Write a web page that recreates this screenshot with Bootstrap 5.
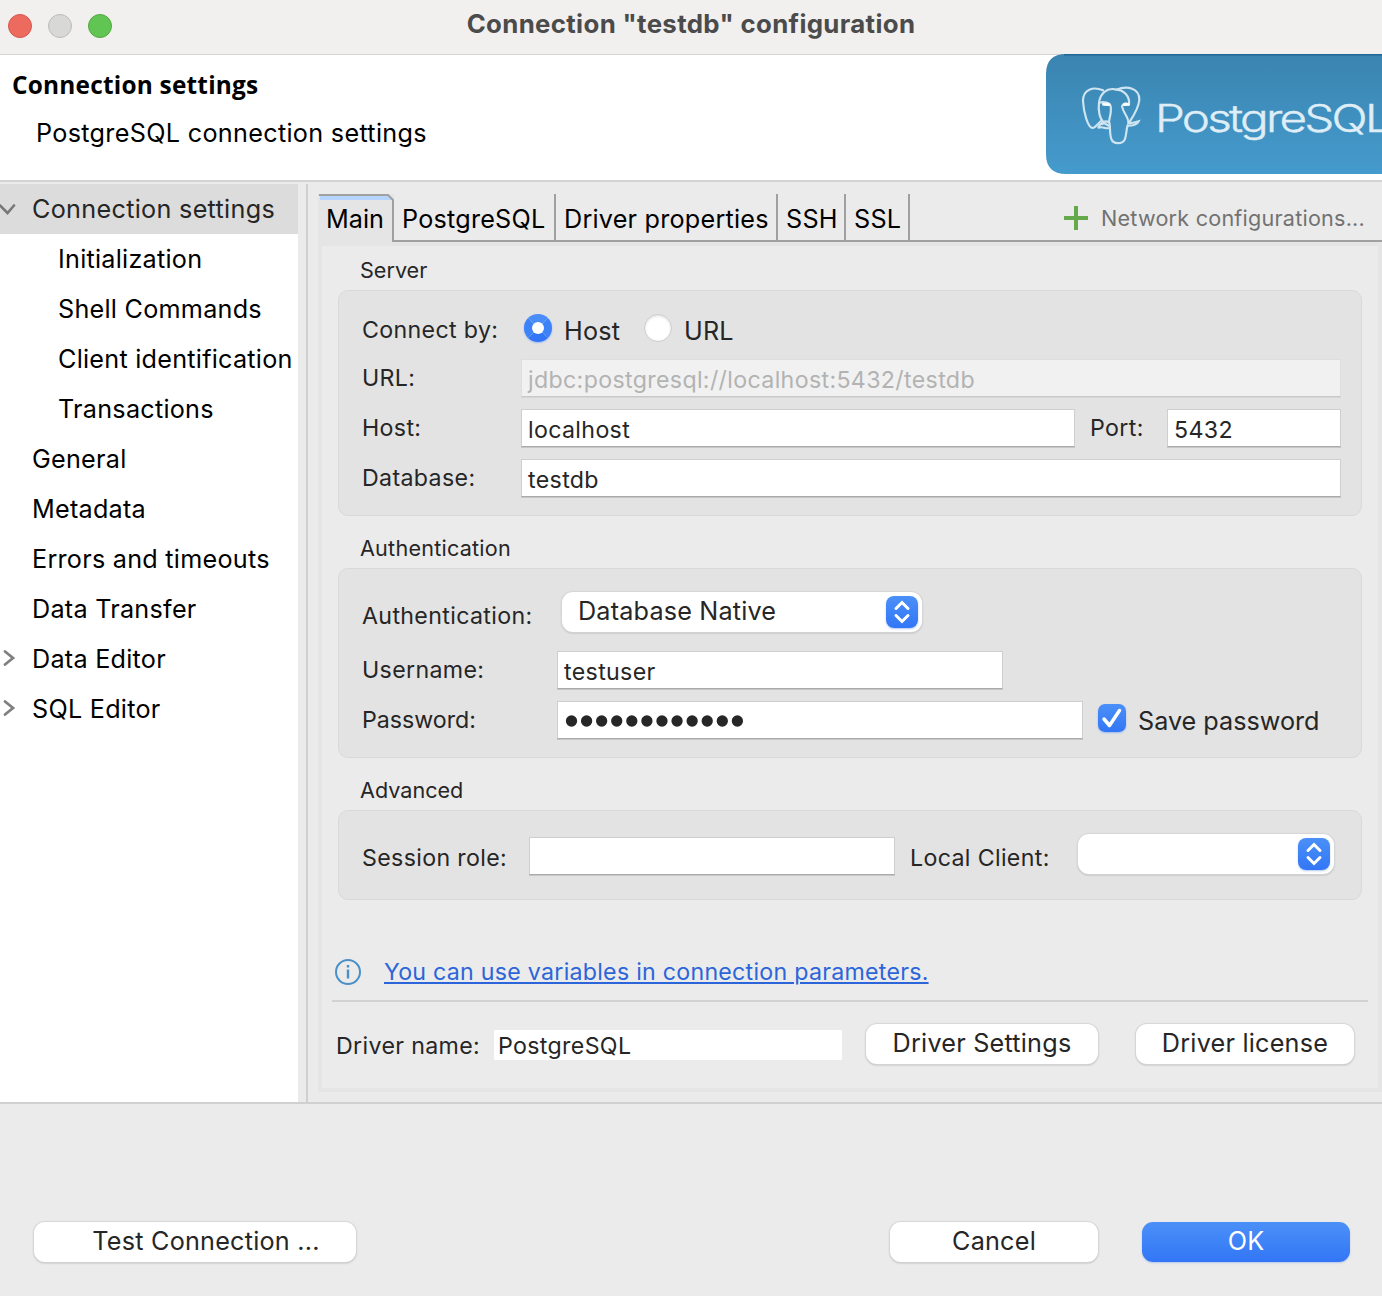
<!DOCTYPE html>
<html lang="en">
<head>
<meta charset="utf-8">
<meta name="viewport" content="width=device-width, initial-scale=1">
<title>Connection "testdb" configuration</title>
<link href="https://cdn.jsdelivr.net/npm/bootstrap@5.3.0/dist/css/bootstrap.min.css" rel="stylesheet">
<style>
  body { width: 1382px; height: 1296px; overflow: hidden; background: #ebebeb; color: #262626; font-family: Inter, "Liberation Sans", sans-serif; font-size: 25.2px; line-height: 40px; letter-spacing: .22px; white-space: nowrap; }
  .f24 { font-size: 23.2px; letter-spacing: .34px; }
  .f22 { font-size: 21.6px; }
  .big { font-size: 25.2px; letter-spacing: .18px; }
  .tight { letter-spacing: 0; }
  .link-text { letter-spacing: .255px; }

  .titlebar { height: 55px; background: #f1f0ee; border-bottom: 1px solid #d6d5d4; padding: 0 8px; }
  .titlebar .side { width: 104px; gap: 16px; padding-top: 2px; }
  .light { width: 24px; height: 24px; border-radius: 50%; border: 1px solid; }
  .light.red { background: #ed6a5f; border-color: #d5564b; }
  .light.gray { background: #d8d8d7; border-color: #bcbbba; }
  .light.green { background: #61c554; border-color: #51a73e; }
  .wintitle { font-weight: 700; color: #4c4b4b; line-height: 48px; font-size: 25.8px; letter-spacing: .35px; }

  .head { height: 127px; background: #fff; color: #000; border-bottom: 2px solid #d3d3d3; }
  .head h1 { font: 700 24.4px/36px "Open Sans", "Noto Sans", sans-serif; letter-spacing: .22px; margin: 12px 0 0 12px; }
  .head p { margin: 9px 0 0 36px; line-height: 42px; letter-spacing: .31px; }
  .banner { width: 336px; height: 120px; margin-top: -1px; }

  .content { height: 922px; padding-top: 2px; border-bottom: 2px solid #d0d0d0; }
  .tree { width: 298px; background: #fff; color: #000; margin-right: 8px; letter-spacing: .25px; }
  .node { height: 50px; line-height: 50px; padding-left: 32px; position: relative; }
  .node.child { padding-left: 58px; }
  .node.sel { background: #dcdcdc; color: #262626; letter-spacing: .3px; }
  .node svg { position: absolute; left: 0; top: 15px; width: 16px; height: 20px; }
  .sashline { width: 2px; background: #d0d0d0; }

  .folder { margin: 10px 0 10px 10px; width: 1064px; }
  .tabs { height: 48px; color: #000; line-height: 50px; }
  .tab1 { width: 76px; background: #e5e5e5; position: relative; padding-left: 8px; letter-spacing: 0; }
  .tab1 svg { position: absolute; left: 0; top: 0; }
  .tab1 span { position: relative; }
  .tab { border-right: 2px solid #a0a0a0; border-bottom: 2px solid #a0a0a0; padding-left: 8px; }
  .tab.t-pg { width: 162px; }
  .tab.t-props { width: 222px; }
  .tab.t-ssh { width: 68px; }
  .tab.t-ssl { width: 64px; }
  .tabrest { border-bottom: 2px solid #a0a0a0; color: #727272; line-height: 48px; padding-right: 17px; }
  .tabrest svg { margin: 12px 13px 0 0; }

  .pane { height: 850px; border: 4px solid #e5e5e5; padding: 0 16px; }
  .grouptitle { padding-left: 22px; line-height: 24px; height: 24px; margin-top: 20px; }
  .grouptitle.first { margin-top: 12px; }
  .groupbox { background: #e3e3e3; border: 1px solid #d9d9d9; border-radius: 10px; padding: 0 20px 0 23px; margin-top: 8px; }
  .server { height: 226px; }
  .server .lab { width: 159px; }
  .server .lab.port { width: 92px; padding-left: 15px; }
  .auth { height: 190px; }
  .auth .lab { width: 195px; }
  .advanced { height: 90px; padding-top: 26px; }
  .line { height: 50px; }
  .line.radios { height: 68px; padding-top: 20px; }
  .line.method { height: 82px; padding-top: 23px; }
  .lab { line-height: 38px; flex: none; }
  .server .lab.wide { width: 162px; }
  .auth .lab.wide { width: 200px; padding-top: 5px; }
  .field { height: 38px; background: #fff; border: 1px solid #cfcfcf; border-bottom-color: #ababab; box-shadow: 0 1px #c6c6c6; line-height: 40px; padding-left: 6px; }
  .field.off { background: #f1f1f1; border-color: #dedede; border-bottom-color: #c8c8c8; box-shadow: 0 1px #d6d6d6; color: #b3b3b3; }
  .rad { width: 28px; height: 28px; margin-top: 3px; border-radius: 50%; background: #fff; border: 1px solid #cdcdcd; box-shadow: inset 0 1px 3px #ddd; }
  .rad.on { border: 8px solid; border-color: #4a8df8 #3d82f7 #3275f6; box-shadow: 0 1px 2px #9ebcf0; }
  .radlabel { margin-left: 12px; width: 80px; }
  .pushbtn, .pop { height: 40px; border-radius: 11px; background: #fff; box-shadow: 0 0 1px 1px #d6d6d6, 0 1px 2px #a0a0a0; text-align: center; line-height: 38px; color: #262626; border: 0; padding: 0; }
  .pushbtn { font-size: 25.2px; line-height: 36px; padding-bottom: 2px; letter-spacing: .22px; }
  .pushbtn.ok { background: linear-gradient(#4b90f8, #3276f6); color: #fff; box-shadow: 0 1px 2px #b5c8ee; }
  .stepper { width: 32px; height: 32px; border-radius: 8px; background: linear-gradient(#4b90f8, #3276f6); box-shadow: 0 1px 2px #b5c8ee; margin: 4px; }
  .tick { width: 28px; height: 28px; border-radius: 7px; background: linear-gradient(#4b90f8, #3276f6); box-shadow: 0 1px 2px #9ebcf0; margin: 3px 12px 0 15px; }
  .hint { margin: 52px 0 0 -4px; height: 48px; }
  .hint svg { margin: 6px 22px 0 0; }
  .varlink { color: #2b65d9; text-decoration: underline; text-decoration-thickness: 2px; text-underline-offset: 2px; }
  .rule { margin: 0 -6px; height: 2px; background: #d2d2d2; }
  .driver { margin: 22px -10px 0 -2px; }
  .drivername { width: 348px; height: 30px; margin-top: 6px; padding-left: 4px; line-height: 32px; }
  .dialogbar { padding: 118px 32px 0 34px; }
</style>
</head>
<body>
<div class="titlebar d-flex justify-content-between">
  <div class="side d-flex align-items-center pb-1"><i class="light red"></i><i class="light gray"></i><i class="light green"></i></div>
  <div class="wintitle">Connection "testdb" configuration</div>
  <div class="side"></div>
</div>
<header class="head d-flex justify-content-between">
  <div><h1>Connection settings</h1><p>PostgreSQL connection settings</p></div>
  <svg class="banner" viewBox="0 0 336 120">
    <defs><linearGradient id="sky" x2="0" y2="1"><stop offset="0" stop-color="#3a84b0"/><stop offset="1" stop-color="#459bcd"/></linearGradient></defs>
    <path d="M336 0H20Q0 0 0 20V100Q0 120 20 120H336Z" fill="url(#sky)"/>
    <path d="M18 .7H336" stroke="#1f6796" stroke-width="1.4"/>
    <g transform="translate(-16 -14) scale(.33333)" fill="none" stroke="#cfe4f1" stroke-width="6.500" stroke-linecap="round">
      <path d="M219 151C190 139 159 147 159 183C161 220 174 262 187 264C197 263 204 250 213 243"/>
      <path d="M207 188C211 160 230 143 256 148C284 150 300 170 297 194"/>
      <path d="M207 188C204 212 209 236 220 246M209 188C222 184 240 188 242 199C245 216 239 232 237 244C242 258 238 282 244 297C250 313 276 313 284 299C290 287 288 270 293 256"/>
      <path d="M259 149C292 136 329 144 328 180C325 208 309 230 297 248"/>
      <path d="M297 194C288 187 279 190 276 199C280 220 297 232 295 249C306 250 318 247 326 244C321 255 304 257 293 257M205 262C215 245 225 240 237 247M206 263C220 258 224 268 238 264M216 252C226 246 230 256 237 257"/>
      <path d="M220 193L236 194M283 194L294 193" stroke="#fff" stroke-width="8"/>
    </g>
    <text x="109" y="78.200" font-family="Inter" font-weight="300" font-size="37.500" letter-spacing="-2.200" fill="#dfedf6" stroke="#dfedf6" stroke-width=".4" textLength="234" lengthAdjust="spacingAndGlyphs">PostgreSQL</text>
  </svg>
</header>
<main class="content d-flex">
  <nav class="tree">
    <div class="node sel"><svg viewBox="0 0 16 20"><path d="M0 6.500L7.500 14L14 6.500" fill="none" stroke="#787878" stroke-width="2.600" stroke-linecap="round"/></svg>Connection settings</div>
    <div class="node child">Initialization</div>
    <div class="node child">Shell Commands</div>
    <div class="node child">Client identification</div>
    <div class="node child">Transactions</div>
    <div class="node">General</div>
    <div class="node">Metadata</div>
    <div class="node">Errors and timeouts</div>
    <div class="node">Data Transfer</div>
    <div class="node"><svg viewBox="0 0 16 20"><path d="M5 2.500L13 9L5 15.500" fill="none" stroke="#808080" stroke-width="2.800" stroke-linecap="round"/></svg>Data Editor</div>
    <div class="node"><svg viewBox="0 0 16 20"><path d="M5 2.500L13 9L5 15.500" fill="none" stroke="#808080" stroke-width="2.800" stroke-linecap="round"/></svg>SQL Editor</div>
  </nav>
  <div class="sashline"></div>
  <section class="folder">
    <div class="tabs d-flex">
      <div class="tab1"><svg width="76" height="48"><path d="M2 2H70L75 6H2Z" fill="#b5d5ff"/><path d="M1 1H70L75 6V48" fill="none" stroke="#a0a0a0" stroke-width="2"/></svg><span>Main</span></div>
      <div class="tab t-pg">PostgreSQL</div>
      <div class="tab t-props">Driver properties</div>
      <div class="tab t-ssh">SSH</div>
      <div class="tab t-ssl">SSL</div>
      <div class="tabrest f22 flex-grow-1 d-flex justify-content-end">
        <svg width="24" height="24"><path d="M12 0V24M0 12H24" stroke="#65a94b" stroke-width="4"/></svg>Network configurations...
      </div>
    </div>
    <div class="pane">
      <div class="grouptitle first f22 tight">Server</div>
      <div class="groupbox server f24">
        <div class="line radios d-flex">
          <div class="lab wide">Connect by:</div>
          <i class="rad on"></i><div class="radlabel big">Host</div>
          <i class="rad"></i><div class="radlabel big">URL</div>
        </div>
        <div class="line d-flex"><div class="lab">URL:</div><div class="field off flex-grow-1">jdbc:postgresql://localhost:5432/testdb</div></div>
        <div class="line d-flex"><div class="lab">Host:</div><div class="field" style="width:554px">localhost</div><div class="lab port">Port:</div><div class="field flex-grow-1">5432</div></div>
        <div class="line d-flex"><div class="lab">Database:</div><div class="field flex-grow-1">testdb</div></div>
      </div>
      <div class="grouptitle f22">Authentication</div>
      <div class="groupbox auth f24">
        <div class="line method d-flex">
          <div class="lab wide">Authentication:</div>
          <div class="pop big d-flex justify-content-between" style="width:360px;padding-left:16px">Database Native<i class="stepper d-flex"><svg width="32" height="32" fill="none" stroke="#fff" stroke-width="3" stroke-linecap="round"><path d="M10 12.500L16 6.500L22 12.500M10 19.500L16 25.500L22 19.500"/></svg></i></div>
        </div>
        <div class="line d-flex"><div class="lab">Username:</div><div class="field" style="width:446px">testuser</div></div>
        <div class="line d-flex">
          <div class="lab tight">Password:</div>
          <div class="field" style="width:526px"><svg class="d-block mt-1" width="190" height="30"><path d="M7.500 15H180" stroke="#262626" stroke-width="11.300" stroke-linecap="round" stroke-dasharray="0 15.080"/></svg></div>
          <i class="tick d-flex"><svg width="28" height="28" fill="none" stroke="#fff" stroke-width="3.500" stroke-linecap="round" stroke-linejoin="round"><path d="M6 15L11.500 21.500L21.500 6.500"/></svg></i>
          <div class="big tight">Save password</div>
        </div>
      </div>
      <div class="grouptitle f22 tight">Advanced</div>
      <div class="groupbox advanced f24 d-flex">
        <div class="lab" style="width:167px;padding-top:2px">Session role:</div><div class="field" style="width:366px"></div>
        <div class="lab" style="width:183px;padding:2px 0 0 15px">Local Client:</div>
        <div class="pop d-flex justify-content-end" style="width:256px;margin-top:-3px"><i class="stepper d-flex"><svg width="32" height="32" fill="none" stroke="#fff" stroke-width="3" stroke-linecap="round"><path d="M10 12.500L16 6.500L22 12.500M10 19.500L16 25.500L22 19.500"/></svg></i></div>
      </div>
      <div class="hint f24 link-text d-flex">
        <svg width="28" height="28" fill="none" stroke="#4a90c8"><circle cx="14" cy="14" r="12" stroke-width="2"/><path d="M14 11.500V20.500M14 7V9.500" stroke-width="2.400"/></svg>
        <a class="varlink" href="#">You can use variables in connection parameters.</a>
      </div>
      <div class="rule"></div>
      <div class="driver d-flex">
        <div class="f24" style="width:158px;line-height:44px">Driver name:</div>
        <div class="drivername bg-white f24">PostgreSQL</div>
        <button class="pushbtn" style="width:232px;margin-left:24px">Driver Settings</button>
        <button class="pushbtn" style="width:218px;margin-left:38px">Driver license</button>
      </div>
    </div>
  </section>
</main>
<footer class="dialogbar d-flex">
  <button class="pushbtn" style="width:322px;padding-left:22px">Test Connection ...</button>
  <button class="pushbtn ms-auto tight" style="width:208px">Cancel</button>
  <button class="pushbtn ok" style="width:208px;margin-left:44px">OK</button>
</footer>
<script src="https://cdn.jsdelivr.net/npm/bootstrap@5.3.0/dist/js/bootstrap.bundle.min.js"></script>
</body>
</html>
